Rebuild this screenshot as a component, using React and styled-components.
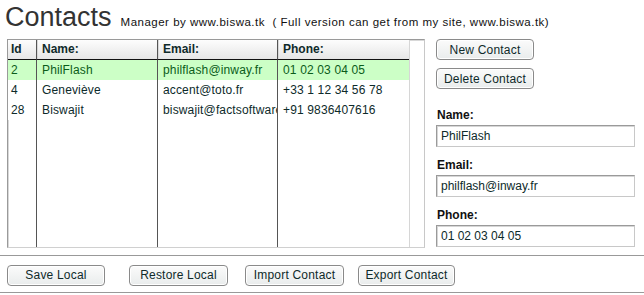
import React, { useState } from 'react'
import styled, { createGlobalStyle } from 'styled-components'

const GlobalStyle = createGlobalStyle`
  body {
    margin: 0;
    background: #fff;
    font-family: "Liberation Sans", Arial, sans-serif;
    color: #0d2a2a;
  }
`

const Page = styled.div`
  width: 644px;
  height: 295px;
  overflow: hidden;
`

const TitleBar = styled.div`
  display: flex;
  align-items: baseline;
  height: 35px;
  padding: 2px 0 0 5px;
`

const Title = styled.h1`
  margin: 0;
  font-size: 27px;
  font-weight: normal;
  color: #333;
  line-height: 30px;
`

const Subtitle = styled.span`
  font-size: 11.5px;
  color: #111;
  margin-left: 9px;
  letter-spacing: 0.5px;
`

const Main = styled.div`
  display: flex;
  padding: 2px 0 0 7px;
  height: 215px;
`

const TablePanel = styled.div`
  width: 416px;
  height: 207px;
  border: 1px solid #9a9a9a;
  border-right-color: #c8c8c8;
  border-bottom-color: #d0d0d0;
  box-shadow: inset 1px 1px 0 #d8d8d8;
  display: flex;
  background: #fff;
`

const Grid = styled.div`
  width: 401px;
  border-right: 1px solid #d6d6d6;
  display: grid;
  grid-template-columns: 28px 121px 120px 132px;
  grid-template-rows: 20px repeat(3, 20px) 1fr;
`

const HeadCell = styled.div`
  background: linear-gradient(#fdfdfd, #e6e6e6);
  border-bottom: 1px solid #111;
  border-left: ${p => (p.$first ? 'none' : '1px solid #555')};
  font-size: 12px;
  font-weight: bold;
  color: #0f2a2a;
  padding-left: ${p => (p.$first ? '3px' : '5px')};
  line-height: 19px;
  box-shadow: inset ${p => (p.$first ? '0' : '1px')} 0 0 #d8d8d8;
`

const Cell = styled.div`
  border-left: ${p => (p.$first ? 'none' : '1px solid #555')};
  background: ${p => (p.$selected ? '#ccffc6' : '#fff')};
  color: ${p => (p.$selected ? '#0b5c1a' : '#0d2a2a')};
  font-size: 12px;
  line-height: 20px;
  padding-left: ${p => (p.$first ? '3px' : '5px')};
  letter-spacing: 0.15px;
  white-space: nowrap;
  overflow: hidden;
  text-overflow: clip;
`

const Filler = styled.div`
  border-left: ${p => (p.$first ? 'none' : '1px solid #555')};
`

const Side = styled.div`
  display: flex;
  flex-direction: column;
  margin-left: 11px;
`

const Button = styled.button`
  width: ${p => p.$w || 98}px;
  height: 21px;
  margin-left: ${p => p.$ml || 0}px;
  flex: none;
  border: 1px solid #8a8a8a;
  border-radius: 4px;
  background: linear-gradient(#fbfbfb, #e9ecec);
  box-shadow: inset 0 0 0 1px #fff;
  font-family: "Liberation Sans", Arial, sans-serif;
  font-size: 12px;
  color: #0f2a2a;
  padding: 0;
  cursor: pointer;
  letter-spacing: 0.2px;
`

const SideButtons = styled.div`
  display: flex;
  flex-direction: column;
  gap: 8px;
  margin-bottom: 19px;
`

const Label = styled.label`
  display: block;
  font-size: 12px;
  font-weight: bold;
  color: #111;
  margin: 0 0 3px 1px;
  line-height: 14px;
`

const Field = styled.div`
  margin-bottom: 11px;
`

const Input = styled.input`
  width: 199px;
  height: 22px;
  box-sizing: border-box;
  border: 1px solid #9a9a9a;
  border-right-color: #c8c8c8;
  border-bottom-color: #c8c8c8;
  box-shadow: inset 1px 1px 0 #d6d6d6;
  padding: 0 4px;
  font-family: "Liberation Sans", Arial, sans-serif;
  font-size: 12px;
  color: #0d2a2a;
  outline: none;
`

const Footer = styled.div`
  border-top: 1px solid #999;
  border-bottom: 1px solid #999;
  display: flex;
  align-items: center;
  height: 38px;
  padding: 2px 0 0 7px;
  box-sizing: border-box;
  margin-top: 1px;
`

const contacts = [
  { id: 2, name: 'PhilFlash', email: 'philflash@inway.fr', phone: '01 02 03 04 05' },
  { id: 4, name: 'Geneviève', email: 'accent@toto.fr', phone: '+33 1 12 34 56 78' },
  { id: 28, name: 'Biswajit', email: 'biswajit@factsoftware.com', phone: '+91 9836407616' },
]

export default function App() {
  const [selected, setSelected] = useState(2)
  const current = contacts.find(c => c.id === selected) || contacts[0]

  return (
    <Page>
      <GlobalStyle />
      <TitleBar>
        <Title>Contacts</Title>
        <Subtitle>Manager by www.biswa.tk &nbsp;( Full version can get from my site, www.biswa.tk)</Subtitle>
      </TitleBar>
      <Main>
        <TablePanel>
          <Grid>
            <HeadCell $first>Id</HeadCell>
            <HeadCell>Name:</HeadCell>
            <HeadCell>Email:</HeadCell>
            <HeadCell>Phone:</HeadCell>
            {contacts.map(c => (
              <React.Fragment key={c.id}>
                <Cell $first $selected={c.id === selected} onClick={() => setSelected(c.id)}>{c.id}</Cell>
                <Cell $selected={c.id === selected} onClick={() => setSelected(c.id)}>{c.name}</Cell>
                <Cell $selected={c.id === selected} onClick={() => setSelected(c.id)}>{c.email}</Cell>
                <Cell $selected={c.id === selected} onClick={() => setSelected(c.id)}>{c.phone}</Cell>
              </React.Fragment>
            ))}
            <Filler $first />
            <Filler />
            <Filler />
            <Filler />
          </Grid>
        </TablePanel>
        <Side>
          <SideButtons>
            <Button>New Contact</Button>
            <Button>Delete Contact</Button>
          </SideButtons>
          <Field>
            <Label>Name:</Label>
            <Input value={current.name} readOnly />
          </Field>
          <Field>
            <Label>Email:</Label>
            <Input value={current.email} readOnly />
          </Field>
          <Field>
            <Label>Phone:</Label>
            <Input value={current.phone} readOnly />
          </Field>
        </Side>
      </Main>
      <Footer>
        <Button>Save Local</Button>
        <Button $w={99} $ml={24}>Restore Local</Button>
        <Button $w={99} $ml={17}>Import Contact</Button>
        <Button $w={97} $ml={14}>Export Contact</Button>
      </Footer>
    </Page>
  )
}
